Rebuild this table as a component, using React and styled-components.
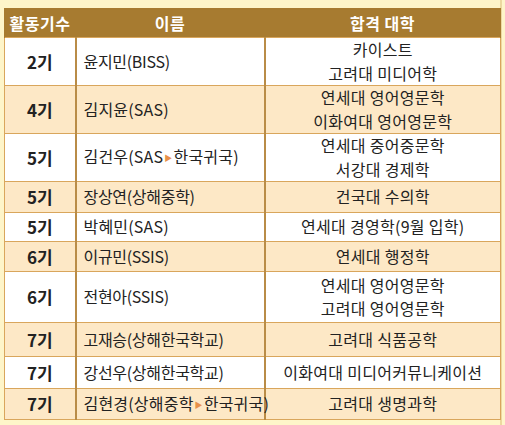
import React from "react";
import styled, {createGlobalStyle} from "styled-components";

const GlobalStyle = createGlobalStyle`
  html, body {
    margin: 0;
    padding: 0;
    background: #fef5c9;
  }
  body {
    font-family: "Noto Sans CJK KR", "Noto Sans", sans-serif;
  }
`

const Page = styled.div`
  width: 502px;
  height: 425px;
  padding: 8px 0 0 4px;
  box-sizing: border-box;
  background: #fef5c9;
  border-right: 2px solid #ecd9a0;
`

const Table = styled.table`
  width: 496px;
  border-collapse: collapse;
  table-layout: fixed;
  font-size: 16px;
  color: #222;
  letter-spacing: 0.3px;
`

const HeadCell = styled.th`
  background: #a77b30;
  color: #fff;
  font-weight: 700;
  font-size: 16px;
  letter-spacing: 0.5px;
  height: 29px;
  padding: 0;
  text-align: center;
  border-left: 1px solid #a77b30;
  border-right: 1px solid #a77b30;
`

const Row = styled.tr`
  height: ${p => p.$h}px;
  background: ${p => (p.$alt ? "#fde8c6" : "#ffffff")};
`

const Cell = styled.td`
  padding: 0;
  line-height: 23.5px;
  text-align: center;
  white-space: nowrap;
  border: 1px solid #d9a65c;
  border-left-color: ${p => (p.$first ? "#d9a65c" : "#b98c47")};
`

const GenCell = styled(Cell)`
  font-weight: 700;
  font-size: 17px;
  letter-spacing: 0;
`

const NameCell = styled(Cell)`
  text-align: left;
  padding-left: 7px;
  letter-spacing: ${p => (p.$tight ? "-0.3px" : "0.2px")};
  border-left: 2px solid #b98c47;
  border-right: 2px solid #b98c47;
`

const Arrow = styled.span`
  color: #e8904a;
  font-size: 8px;
  margin: 0 1px;
  vertical-align: 2px;
`

const rows = [
  {gen: "2기", name: ["윤지민(BISS)"], school: ["카이스트", "고려대 미디어학"], h: 47},
  {gen: "4기", name: ["김지윤(SAS)"], school: ["연세대 영어영문학", "이화여대 영어영문학"], h: 48},
  {gen: "5기", name: ["김건우(SAS", "한국귀국)"], school: ["연세대 중어중문학", "서강대 경제학"], h: 48},
  {gen: "5기", name: ["장상연(상해중학)"], school: ["건국대 수의학"], h: 31},
  {gen: "5기", name: ["박혜민(SAS)"], school: ["연세대 경영학(9월 입학)"], h: 29},
  {gen: "6기", name: ["이규민(SSIS)"], school: ["연세대 행정학"], h: 30},
  {gen: "6기", name: ["전현아(SSIS)"], school: ["연세대 영어영문학", "고려대 영어영문학"], h: 51},
  {gen: "7기", name: ["고재승(상해한국학교)"], school: ["고려대 식품공학"], h: 34},
  {gen: "7기", name: ["강선우(상해한국학교)"], school: ["이화여대 미디어커뮤니케이션"], h: 32},
  {gen: "7기", name: ["김현경(상해중학", "한국귀국)"], school: ["고려대 생명과학"], h: 31},
];

const App = () => (
  <Page>
    <GlobalStyle />
    <Table>
      <colgroup>
        <col style={{width: 71}} />
        <col style={{width: 189}} />
        <col style={{width: 236}} />
      </colgroup>
      <thead>
        <tr>
          <HeadCell>활동기수</HeadCell>
          <HeadCell>이름</HeadCell>
          <HeadCell>합격 대학</HeadCell>
        </tr>
      </thead>
      <tbody>
        {rows.map((r, i) => (
          <Row key={i} $h={r.h} $alt={i % 2 === 1}>
            <GenCell $first>{r.gen}</GenCell>
            <NameCell $tight={r.name[0].length > 8}>
              {r.name[0]}
              {r.name[1] && <><Arrow>▶</Arrow>{r.name[1]}</>}
            </NameCell>
            <Cell>
              {r.school.map((s, j) => (
                <div key={j}>{s}</div>
              ))}
            </Cell>
          </Row>
        ))}
      </tbody>
    </Table>
  </Page>
);

export default App;
